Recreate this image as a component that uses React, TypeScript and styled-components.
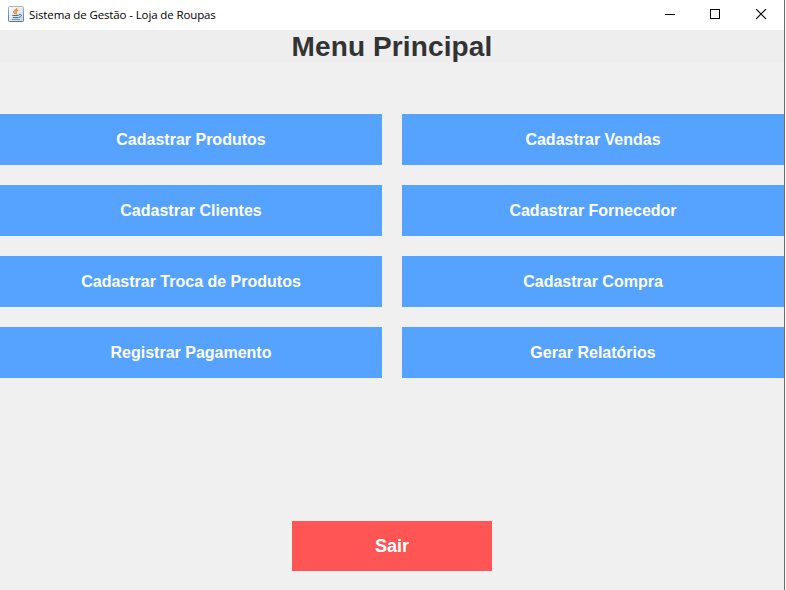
import React from "react";
import styled, { createGlobalStyle } from "styled-components";

const GlobalStyle = createGlobalStyle`
  * { box-sizing: border-box; }
  body { margin: 0; background: #ffffff; overflow: hidden; }
`;

const Window = styled.div`
  display: flex;
  flex-direction: column;
  width: 785px;
  height: 590px;
  border-right: 1px solid #6b6b6b;
  background: #f0f0f0;
  font-family: "Liberation Sans", Arial, sans-serif;
`;

const TitleBar = styled.header`
  display: flex;
  align-items: center;
  flex: none;
  height: 30px;
  padding: 0 0 2px 8px;
  background: #ffffff;
`;

const WindowTitle = styled.span`
  flex: 1;
  margin-left: 5px;
  padding-top: 2px;
  font: 11.5px/16px "Open Sans", "Noto Sans", sans-serif;
  letter-spacing: -0.12px;
  color: #000000;
  white-space: nowrap;
`;

const WindowControl = styled.button`
  display: flex;
  align-items: center;
  justify-content: center;
  width: 46px;
  height: 28px;
  padding: 0 1px 0 0;
  border: 0;
  background: transparent;
`;

const Controls = styled.div`
  display: flex;
  margin-right: -1px;
`;

const Heading = styled.h1`
  flex: none;
  margin: 0;
  height: 33px;
  background: #eeeeee;
  color: #333333;
  font-size: 28px;
  line-height: 33px;
  font-weight: 700;
  letter-spacing: 0.12px;
  text-align: center;
`;

const MenuGrid = styled.main`
  display: grid;
  grid-template-columns: 1fr 1fr;
  grid-auto-rows: 51px;
  gap: 20px;
  padding-top: 51px;
  flex: 1;
  align-content: start;
`;

const ActionButton = styled.button<{ $danger?: boolean }>`
  border: 0;
  padding: 0;
  color: #ffffff;
  background: ${(p) => (p.$danger ? "#ff5555" : "#55a3ff")};
  font-family: inherit;
  font-weight: 700;
  font-size: ${(p) => (p.$danger ? 18 : 16)}px;
`;

const Footer = styled.footer`
  display: grid;
  flex: none;
  grid-template-columns: 200px;
  grid-template-rows: 50px;
  justify-content: center;
  padding-bottom: 19px;
`;

const items = [
  "Cadastrar Produtos",
  "Cadastrar Vendas",
  "Cadastrar Clientes",
  "Cadastrar Fornecedor",
  "Cadastrar Troca de Produtos",
  "Cadastrar Compra",
  "Registrar Pagamento",
  "Gerar Relatórios",
];

const JavaIcon = () => (
  <svg width="16" height="16" viewBox="0 0 16 16" fill="none">
    <defs>
      <linearGradient id="tile" x1="0" y1="0" x2="1" y2="1">
        <stop offset="0" stopColor="#ffffff" />
        <stop offset="1" stopColor="#c3d4e2" />
      </linearGradient>
      <linearGradient id="edge" x1="0" y1="0" x2="0" y2="1">
        <stop offset="0" stopColor="#a3b8ca" />
        <stop offset="1" stopColor="#55799a" />
      </linearGradient>
    </defs>
    <rect x=".5" y=".5" width="15" height="15" rx="1" fill="url(#tile)" stroke="url(#edge)" />
    <path d="M8.8 2.2C8.8 4.4 5.2 4.2 5.7 6.2c.3 1 1.3 1.1 1.3 2.1M10.2 4.2C8.2 4.7 7.2 5.6 8.1 6.6c.5.6.3 1.2-.3 1.7" stroke="#ee8a2c" strokeWidth="1.4" />
    <path d="M4.3 9.5h6.4M5 11.5h5.4" stroke="#4c7397" strokeWidth="1.1" />
    <path d="M10.8 8.6h2.1c1 .3.6 1.8-.7 2.3l-1.4.5" stroke="#4c7397" />
    <path d="M3.6 13.4h8.2" stroke="#6f90ad" />
  </svg>
);

export default function App() {
  return (
    <>
      <GlobalStyle />
      <Window>
        <TitleBar>
          <JavaIcon />
          <WindowTitle>Sistema de Gestão - Loja de Roupas</WindowTitle>
          <Controls>
            <WindowControl aria-label="Minimizar">
              <svg width="11" height="11" viewBox="0 0 11 11">
                <path d="M1 5.5h10" stroke="#000" shapeRendering="crispEdges" />
              </svg>
            </WindowControl>
            <WindowControl aria-label="Maximizar">
              <svg width="11" height="11" viewBox="0 0 11 11">
                <rect x=".5" y=".5" width="9" height="9" fill="none" stroke="#000" />
              </svg>
            </WindowControl>
            <WindowControl aria-label="Fechar">
              <svg width="11" height="11" viewBox="0 0 11 11">
                <path d="M0 0l10 10M10 0L0 10" stroke="#000" strokeWidth="1.1" />
              </svg>
            </WindowControl>
          </Controls>
        </TitleBar>
        <Heading>Menu Principal</Heading>
        <MenuGrid>
          {items.map((label) => (
            <ActionButton key={label}>{label}</ActionButton>
          ))}
        </MenuGrid>
        <Footer>
          <ActionButton $danger>Sair</ActionButton>
        </Footer>
      </Window>
    </>
  );
}
